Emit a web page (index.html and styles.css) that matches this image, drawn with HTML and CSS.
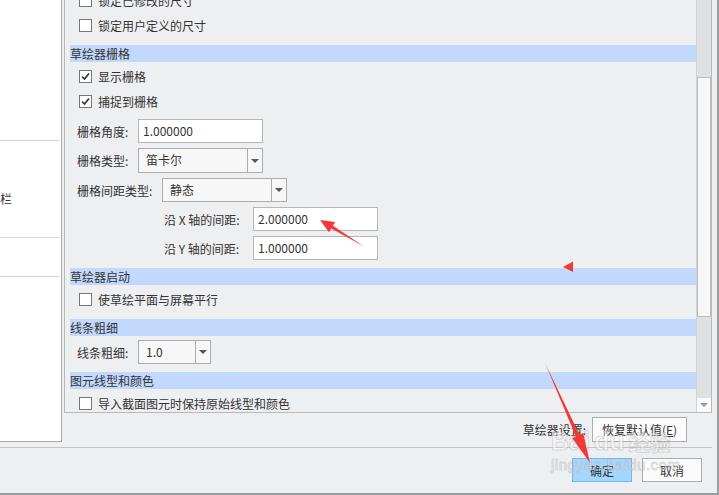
FILE: index.html
```html
<!DOCTYPE html>
<html lang="zh-CN">
<head>
    <meta charset="UTF-8">
    <title>草绘器选项</title>
    <link rel="stylesheet" href="styles.css">
</head>
<body>

<div class="dialog">
    <div class="main">
        <div class="sidebar">
            <div class="side-row first"></div>
            <div class="side-row second">栏</div>
            <div class="side-row third"></div>
        </div>

        <div class="work">
            <div class="options">
                <div class="scroll">
                    <div class="scroll-inner">
                        <div class="check-row"><span class="box"></span>锁定已修改的尺寸</div>
                        <div class="check-row"><span class="box"></span>锁定用户定义的尺寸</div>

                        <div class="section-title gap-top">草绘器栅格</div>
                        <div class="check-row after-title"><span class="box checked"><svg viewBox="0 0 11 11"><polyline points="2,5.5 4.5,8 9,2.5"/></svg></span>显示栅格</div>
                        <div class="check-row"><span class="box checked"><svg viewBox="0 0 11 11"><polyline points="2,5.5 4.5,8 9,2.5"/></svg></span>捕捉到栅格</div>

                        <div class="field">
                            <span class="label">栅格角度:</span>
                            <div class="input">1.000000</div>
                        </div>
                        <div class="field tall">
                            <span class="label">栅格类型:</span>
                            <div class="select">
                                <span class="val">笛卡尔</span>
                                <span class="arrow"><i></i></span>
                            </div>
                        </div>
                        <div class="field">
                            <span class="label wide">栅格间距类型:</span>
                            <div class="select">
                                <span class="val">静态</span>
                                <span class="arrow"><i></i></span>
                            </div>
                        </div>
                        <div class="field sub">
                            <span class="label">沿 X 轴的间距:</span>
                            <div class="input">2.000000</div>
                        </div>
                        <div class="field sub">
                            <span class="label">沿 Y 轴的间距:</span>
                            <div class="input">1.000000</div>
                        </div>

                        <div class="section-title big-gap">草绘器启动</div>
                        <div class="check-row after-title"><span class="box"></span>使草绘平面与屏幕平行</div>

                        <div class="section-title gap-top">线条粗细</div>
                        <div class="field small-gap">
                            <span class="label">线条粗细:</span>
                            <div class="select short">
                                <span class="val">1.0</span>
                                <span class="arrow"><i></i></span>
                            </div>
                        </div>

                        <div class="section-title big-gap">图元线型和颜色</div>
                        <div class="check-row after-title"><span class="box"></span>导入截面图元时保持原始线型和颜色</div>
                    </div>
                </div>
                <div class="scrollbar">
                    <div class="thumb"></div>
                    <div class="track-rest"></div>
                    <div class="down"><i></i></div>
                </div>
            </div>

            <div class="work-foot">
                <span class="foot-label">草绘器设置:</span>
                <button class="btn reset">恢复默认值(<u>E</u>)</button>
            </div>
        </div>
    </div>

    <div class="actions">
        <button class="btn primary">确定</button>
        <button class="btn">取消</button>
    </div>

    <div class="watermark">
        <div class="wm-logo"><span class="wm-bai">Bai</span><span class="wm-du">du</span><span class="wm-jy">经验</span></div>
        <div class="wm-url">jingyan.baidu.com</div>
    </div>

    <svg class="marks" width="719" height="495" viewBox="0 0 719 495">
        <polygon points="320,220 335.2,221.9 332.9,225.8 364,246.5 331.3,228.4 329,232.3"/>
        <polygon points="563,267 573,261.5 573,272"/>
        <polygon points="590,463 583.2,433.1 579.5,434.8 545,363 575.9,436.4 572.2,438.1"/>
    </svg>
</div>

</body>
</html>
```

FILE: styles.css
```css
* {
    box-sizing: border-box;
}

body {
    margin: 0;
    background-color: #eeeff1;
    font-family: "Noto Sans CJK SC", "Liberation Sans", sans-serif;
    font-size: 12px;
    color: #333;
}

.dialog {
    position: relative;
    width: 719px;
    height: 495px;
    border-right: 2px solid #9d9d9d;
    border-bottom: 2px solid #9d9d9d;
    overflow: hidden;
}

.main {
    display: flex;
    width: 712px;
    height: 448px;
    border-bottom: 1px solid #c4c4c4;
}

/* left tree */
.sidebar {
    width: 62px;
    height: 442px;
    background-color: #fff;
    border-right: 1px solid #a9a9a9;
    border-bottom: 1px solid #a9a9a9;
}

.side-row {
    width: 59px;
    border-bottom: 1px solid #d6d6d6;
}

.side-row.first {
    height: 141px;
}

.side-row.second {
    height: 97px;
    padding-top: 49px;
    line-height: 17px;
}

.side-row.third {
    height: 39px;
}

/* options panel */
.work {
    margin-left: 2px;
    width: 648px;
    display: flex;
    flex-direction: column;
}

.options {
    display: flex;
    height: 413px;
    border: 1px solid #b9b9b9;
    border-top: none;
    overflow: hidden;
}

.scroll {
    flex: 1;
    padding-left: 5px;
    overflow: hidden;
}

.scroll-inner {
    margin-top: -12px;
}

.section-title {
    height: 17px;
    line-height: 17px;
    background-color: #c3d8fd;
}

.gap-top {
    margin-top: 7px;
}

.big-gap {
    margin-top: 8px;
}

.check-row {
    display: flex;
    align-items: center;
    height: 25px;
    padding-left: 9px;
}

.check-row.after-title {
    margin-top: 2px;
}

.box {
    width: 13px;
    height: 13px;
    margin-right: 6px;
    border: 1px solid #767676;
    background-color: #fff;
}

.box svg {
    display: block;
    width: 11px;
    height: 11px;
}

.box polyline {
    fill: none;
    stroke: #333;
    stroke-width: 1.6;
}

.field {
    display: flex;
    align-items: center;
    height: 24px;
    margin-top: 5px;
    padding-left: 7px;
}

.field.tall {
    height: 25px;
}

.field.small-gap {
    margin-top: 4px;
}

.field.sub {
    padding-left: 94px;
}

.label {
    width: 61px;
    white-space: nowrap;
}

.label.wide {
    width: 85px;
}

.sub .label {
    width: 89px;
}

.input {
    width: 125px;
    height: 24px;
    line-height: 22px;
    padding-left: 4px;
    background-color: #fff;
    border: 1px solid #b6b6b6;
}

.select {
    display: flex;
    width: 125px;
    height: 100%;
    background-color: #f7f7f7;
    border: 1px solid #adadad;
}

.select.short {
    width: 73px;
}

.select .val {
    flex: 1;
    padding-left: 7px;
    line-height: 22px;
}

.select .arrow {
    width: 15px;
    display: flex;
    align-items: center;
    justify-content: center;
    border-left: 1px solid #adadad;
}

.arrow i,
.down i {
    width: 0;
    height: 0;
    border-left: 4px solid transparent;
    border-right: 4px solid transparent;
    border-top: 4px solid #555;
}

/* scrollbar */
.scrollbar {
    width: 15px;
    display: flex;
    flex-direction: column;
    background-color: #dfe0e2;
    border-left: 1px solid #d2d3d5;
}

.thumb {
    margin-top: 77px;
    height: 240px;
    background-color: #f7f7f7;
    border: 1px solid #bdbdbd;
}

.track-rest {
    flex: 1;
}

.down {
    height: 14px;
    display: flex;
    align-items: center;
    justify-content: center;
    background-color: #fbfbfb;
}

.down i {
    border-top-color: #9a9a9a;
}

/* buttons */
.work-foot {
    display: flex;
    justify-content: flex-end;
    align-items: center;
    margin-top: 4px;
    padding-right: 25px;
}

.foot-label {
    margin-right: 6px;
}

.btn {
    height: 24px;
    width: 60px;
    padding: 0;
    font-family: inherit;
    font-size: 12px;
    color: #333;
    background-color: #fbfbfb;
    border: 1px solid #adadad;
}

.btn.reset {
    width: 95px;
    height: 25px;
}

.btn.primary {
    background-color: #a5d6fd;
    border-color: #72b7ee;
}

.actions {
    display: flex;
    justify-content: flex-end;
    gap: 10px;
    padding-top: 10px;
    padding-right: 15px;
}

/* screenshot annotations */
.watermark {
    position: absolute;
    left: 551px;
    top: 418px;
    pointer-events: none;
    color: rgba(255, 255, 255, 0.55);
    -webkit-text-stroke: 1px rgba(150, 150, 150, 0.35);
    font-family: "Liberation Sans", sans-serif;
}

.wm-logo {
    display: flex;
    align-items: flex-end;
    height: 38px;
    font-size: 25px;
    font-weight: bold;
}

.wm-du {
    margin-left: 4px;
}

.wm-jy {
    margin-left: 4px;
    font-family: "Noto Sans CJK SC", sans-serif;
    font-size: 21px;
}

.wm-url {
    font-size: 15px;
    letter-spacing: 0.5px;
}

.marks {
    position: absolute;
    left: 0;
    top: 0;
    pointer-events: none;
}

.marks polygon {
    fill: #f33838;
}
```
